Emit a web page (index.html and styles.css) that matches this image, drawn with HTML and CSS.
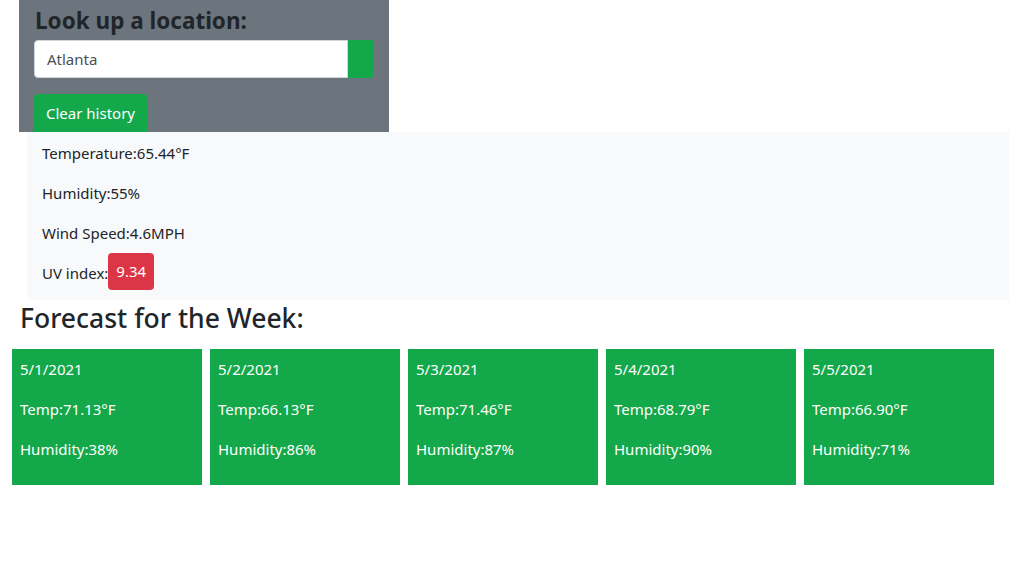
FILE: index.html
```html
<!DOCTYPE html>
<html lang="en">
<head>
<meta charset="utf-8">
<title>Weather Dashboard</title>
<link rel="stylesheet" href="styles.css">
</head>
<body>
<div class="search-panel">
  <h3 class="search-title">Look up a location:</h3>
  <div class="input-group">
    <input class="city-input" type="text" value="Atlanta">
    <button class="search-btn" type="button" aria-label="Search"></button>
  </div>
  <button class="clear-btn" type="button">Clear history</button>
</div>
<div class="current">
  <p class="stat">Temperature:65.44°F</p>
  <p class="stat">Humidity:55%</p>
  <p class="stat">Wind Speed:4.6MPH</p>
  <p class="stat last">UV index:<span class="uv-badge">9.34</span></p>
</div>
<h4 class="forecast-title">Forecast for the Week:</h4>
<div class="forecast">
  <div class="card"><p>5/1/2021</p><p>Temp:71.13°F</p><p>Humidity:38%</p></div>
  <div class="card"><p>5/2/2021</p><p>Temp:66.13°F</p><p>Humidity:86%</p></div>
  <div class="card"><p>5/3/2021</p><p>Temp:71.46°F</p><p>Humidity:87%</p></div>
  <div class="card"><p>5/4/2021</p><p>Temp:68.79°F</p><p>Humidity:90%</p></div>
  <div class="card"><p>5/5/2021</p><p>Temp:66.90°F</p><p>Humidity:71%</p></div>
</div>
</body>
</html>
```

FILE: styles.css
```css
* { box-sizing: border-box; }
body {
  margin: 0;
  font-family: "Noto Sans", "Open Sans", sans-serif;
  font-size: 16px;
  line-height: 24px;
  color: #212529;
  background: #fff;
}
.search-panel {
  margin-left: 19px;
  width: 370px;
  background: #6c757d;
  padding: 6px 15px 0;
}
.search-title {
  margin: 0 0 5px 1px;
  font-size: 22.5px;
  line-height: 29px;
  font-weight: 700;
  color: #212529;
}
.input-group {
  display: flex;
  width: 340px;
  height: 38px;
}
.city-input {
  flex: 1;
  height: 38px;
  border: 1px solid #ced4da;
  border-radius: 4px 0 0 4px;
  padding: 6px 12px;
  font-family: inherit;
  font-size: 15px;
  color: #495057;
  background: #fff;
  outline: none;
}
.search-btn {
  width: 26px;
  height: 38px;
  border: none;
  background: #13a84a;
  border-radius: 0 4px 4px 0;
  padding: 0;
}
.clear-btn {
  margin-top: 16px;
  height: 38px;
  padding: 0 12px;
  border: none;
  border-radius: 4px 4px 0 0;
  background: #13a84a;
  color: #fff;
  font-family: inherit;
  font-size: 15px;
  display: block;
}
.current {
  margin-left: 27px;
  background: #f8f9fa;
  padding: 9px 15px 13px;
  border-radius: 0 0 0 4px;
}
.stat {
  margin: 0 0 16px;
  font-size: 15px;
}
.stat.last { margin-bottom: 0; }
.uv-badge {
  display: inline-block;
  vertical-align: middle;
  margin: -10px 0 -3px;
  background: #dc3545;
  color: #fff;
  border-radius: 4px;
  padding: 6px 8px 7px;
  line-height: 24px;
}
.forecast-title {
  margin: 2px 0 14px 20px;
  font-size: 26.5px;
  line-height: 33px;
  font-weight: 500;
}
.forecast {
  display: flex;
  gap: 8px;
  padding-left: 12px;
}
.card {
  width: 190px;
  background: #13a84a;
  color: #fff;
  padding: 8px;
}
.card p {
  margin: 0 0 16px;
  font-size: 15px;
}
```
